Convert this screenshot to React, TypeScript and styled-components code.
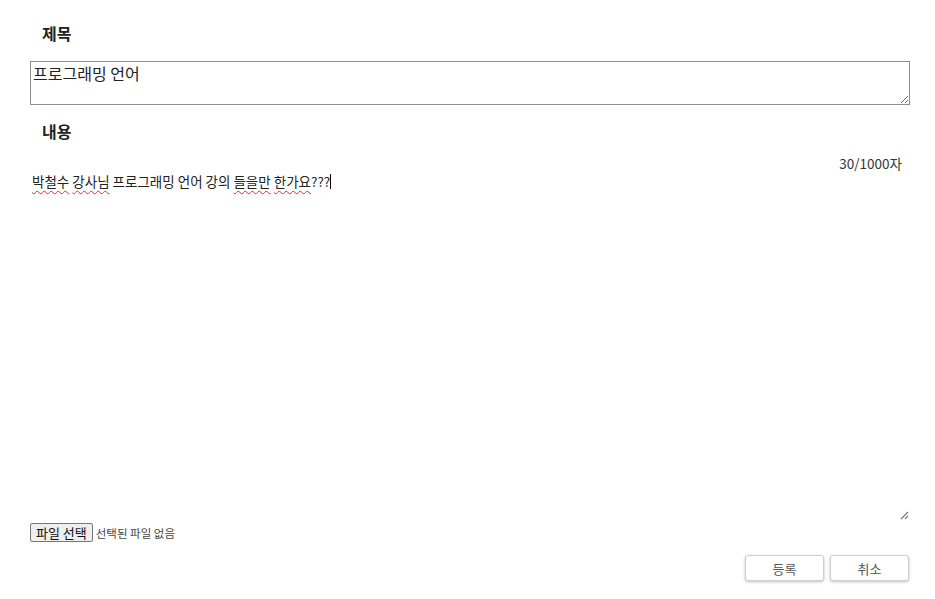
import React, { useState } from 'react';
import styled, { createGlobalStyle } from 'styled-components';

const GlobalStyle = createGlobalStyle`
  html, body {
    margin: 0;
    padding: 0;
    background: #fff;
  }
  body {
    font-family: "Noto Sans CJK KR", "Noto Sans", sans-serif;
    color: #222;
  }
`;

const Page = styled.main`
  width: 935px;
  height: 599px;
  box-sizing: border-box;
  padding: 22px 25px 0 30px;
  display: flex;
  flex-direction: column;
`;

const Label = styled.h3<{ $top?: number }>`
  margin: ${p => p.$top ?? 0}px 0 0 0;
  padding-left: 12px;
  font-size: 16px;
  line-height: 22px;
  font-weight: 700;
  color: #222;
`;

const TitleInput = styled.textarea`
  margin-top: 17px;
  width: 100%;
  height: 44px;
  box-sizing: border-box;
  border: 1px solid #8f8f8f;
  padding: 0 2px;
  font-family: "Noto Sans CJK KR", sans-serif;
  font-size: 16px;
  line-height: 22px;
  color: #222;
  outline: none;
`;

const Counter = styled.div`
  margin-top: 12px;
  align-self: flex-end;
  padding-right: 8px;
  font-size: 13.5px;
  line-height: 18px;
  color: #333;
`;

const Editor = styled.div`
  position: relative;
  height: 350px;
  padding: 0 2px;
  font-size: 13.5px;
  line-height: 18px;
  color: #222;
`;

const Typo = styled.span`
  text-decoration: underline wavy #e0302a;
  text-decoration-thickness: 1px;
  text-underline-offset: 3px;
`;

const Caret = styled.span`
  display: inline-block;
  width: 1px;
  height: 15px;
  background: #000;
  vertical-align: -2px;
`;

const Grip = styled.svg`
  position: absolute;
  right: 1px;
  bottom: 2px;
`;

const FileRow = styled.div`
  display: flex;
  align-items: center;
  gap: 3px;
  height: 19px;
  margin-top: 1px;
`;

const FileButton = styled.button`
  height: 19px;
  padding: 0 5px;
  border: 1px solid #767676;
  border-radius: 2px;
  background: #efefef;
  font-family: "Noto Sans CJK KR", sans-serif;
  font-size: 13px;
  line-height: 15px;
  color: #111;
`;

const FileText = styled.span`
  font-size: 11.5px;
  color: #444;
`;

const Actions = styled.div`
  margin-top: 13px;
  align-self: flex-end;
  padding-right: 1px;
  display: flex;
  gap: 6px;
`;

const ActionButton = styled.button`
  width: 79px;
  height: 26px;
  border: 1px solid #cfcfcf;
  border-radius: 3px;
  background: #fff;
  box-shadow: 0 1px 3px rgba(0, 0, 0, 0.25);
  font-family: "Noto Sans CJK KR", sans-serif;
  font-size: 13px;
  color: #555;
`;

export default function App() {
  const [title, setTitle] = useState('프로그래밍 언어');

  return (
    <>
      <GlobalStyle />
      <Page>
        <Label>제목</Label>
        <TitleInput value={title} onChange={e => setTitle(e.target.value)} spellCheck={false} />
        <Label $top={15}>내용</Label>
        <Counter>30/1000자</Counter>
        <Editor>
          <Typo>박철수</Typo> <Typo>강사님</Typo> 프로그래밍 언어 강의 <Typo>들을만</Typo>{' '}
          <Typo>한가요</Typo>???<Caret />
          <Grip width="9" height="9" viewBox="0 0 9 9">
            <path d="M8 1 L1 8 M8 5 L5 8" stroke="#777" strokeWidth="1.1" />
          </Grip>
        </Editor>
        <FileRow>
          <FileButton>파일 선택</FileButton>
          <FileText>선택된 파일 없음</FileText>
        </FileRow>
        <Actions>
          <ActionButton>등록</ActionButton>
          <ActionButton>취소</ActionButton>
        </Actions>
      </Page>
    </>
  );
}
